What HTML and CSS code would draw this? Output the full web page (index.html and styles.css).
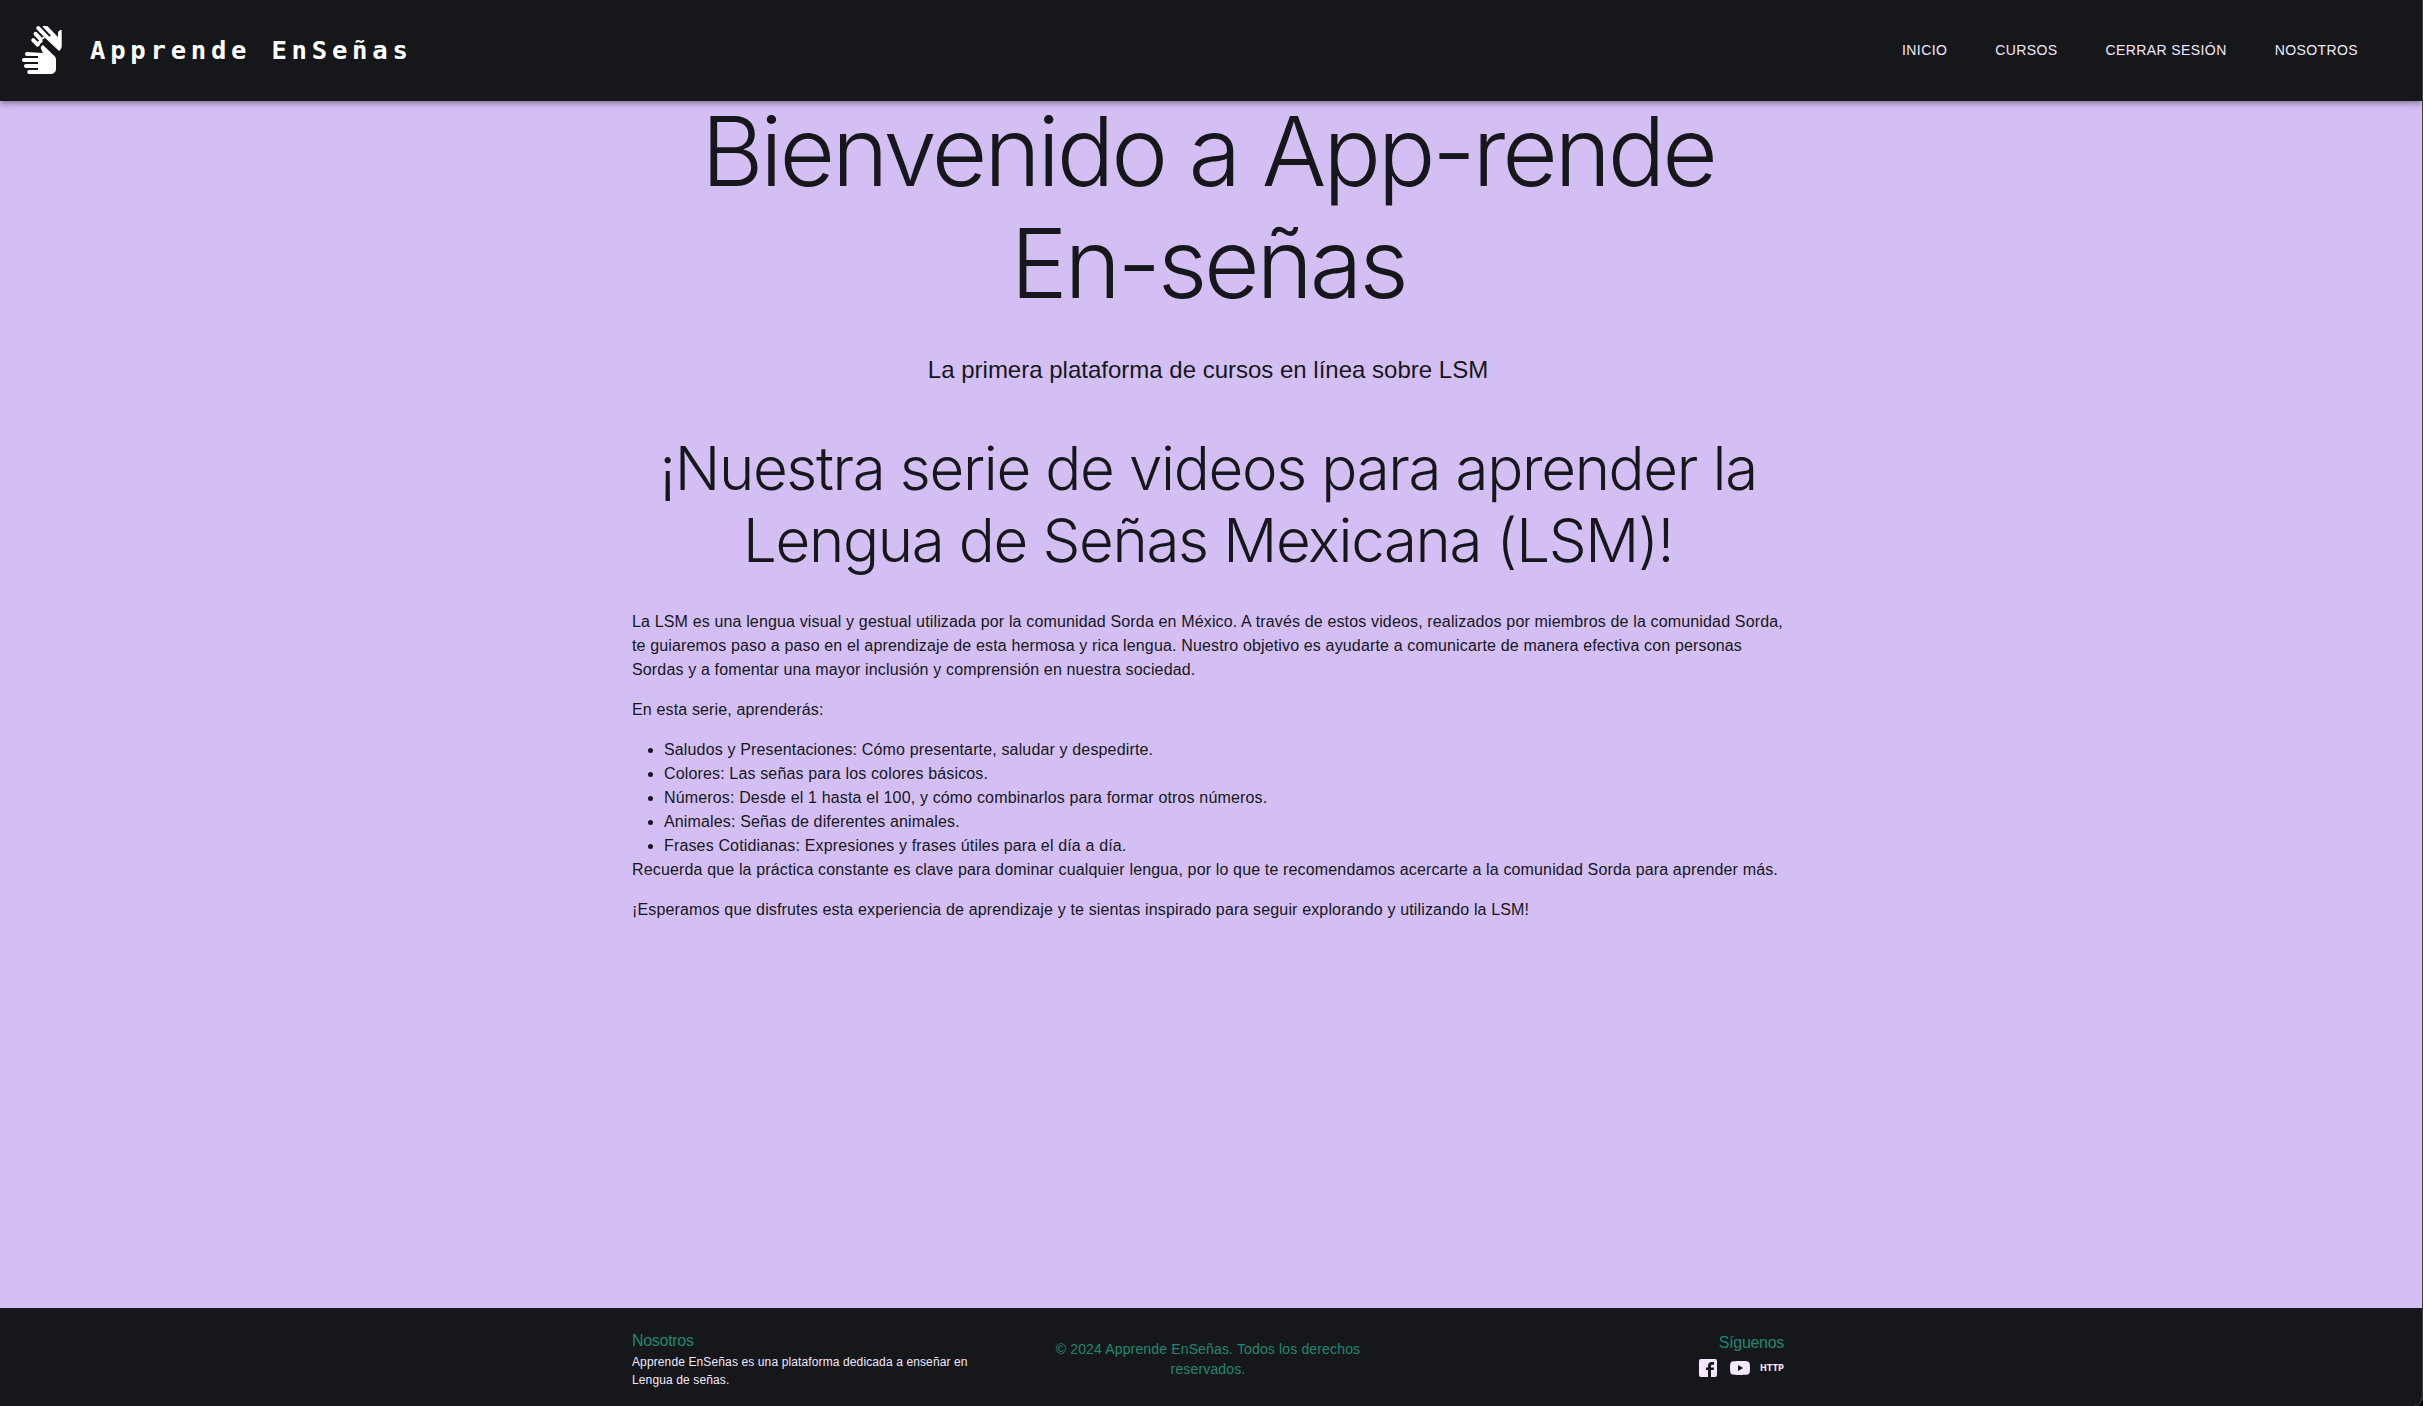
FILE: index.html
```html
<!DOCTYPE html>
<html lang="es">
<head>
<meta charset="utf-8">
<title>Apprende EnSeñas</title>
<link rel="stylesheet" href="styles.css">
</head>
<body>
<div class="page">
  <header class="topbar">
    <div class="brand">
      <svg class="brand-icon" viewBox="0 0 24 24" aria-hidden="true"><path d="M12.490 13.500l-.93-1.860c-.37-.74-.07-1.640.67-2.010l.26-.13 5.730 5.460c.5.470.78 1.130.78 1.810v4.730c0 1.380-1.120 2.500-2.500 2.500H5.600c-.55 0-1-.45-1-1s.45-1 1-1H10v-1H4c-.55 0-1-.45-1-1s.45-1 1-1h6v-1H3c-.55 0-1-.45-1-1s.45-1 1-1h7v-1H4.500c-.55 0-1-.45-1-1s.45-1 1-1z"/><path transform="translate(.6 0)" d="M11.700 8.030c-.8.380-1.350 1.080-1.560 1.880l-1.200.600-2.650-2.770c-.38-.4-.36-1.030.04-1.410.4-.38 1.030-.36 1.410.04l1.500 1.560.72-.69-2.500-2.650c-.38-.4-.36-1.030.04-1.410.4-.38 1.030-.36 1.410.04l3.200 3.350.72-.690-4-4.170c-.38-.4-.36-1.030.04-1.410.4-.38 1.030-.36 1.410.04l4.840 5.070.72-.69-3.800-3.980c-.38-.4-.36-1.030.04-1.410.4-.38 1.030-.36 1.410.04l5.840 6.100.1-2.080c.04-.83.74-1.460 1.560-1.420l.26.010v8.200c0 .680-.28 1.330-.78 1.800l-.56.530-7.300-6.900c-.26-.25-.6-.39-.95-.39z"/></svg>
      <span class="brand-name">Apprende EnSeñas</span>
    </div>
    <nav class="menu">
      <a>INICIO</a><a>CURSOS</a><a>CERRAR SESIÓN</a><a>NOSOTROS</a>
    </nav>
  </header>

  <main class="content">
    <h1 class="title">Bienvenido a App-rende<br>En-señas</h1>
    <p class="subtitle">La primera plataforma de cursos en línea sobre LSM</p>
    <h2 class="heading">¡Nuestra serie de videos para aprender la<br>Lengua de Señas Mexicana (LSM)!</h2>
    <div class="copy">
      <p>La LSM es una lengua visual y gestual utilizada por la comunidad Sorda en México. A través de estos videos, realizados por miembros de la comunidad Sorda,<br>te guiaremos paso a paso en el aprendizaje de esta hermosa y rica lengua. Nuestro objetivo es ayudarte a comunicarte de manera efectiva con personas<br>Sordas y a fomentar una mayor inclusión y comprensión en nuestra sociedad.</p>
      <p>En esta serie, aprenderás:</p>
      <ul>
        <li>Saludos y Presentaciones: Cómo presentarte, saludar y despedirte.</li>
        <li>Colores: Las señas para los colores básicos.</li>
        <li>Números: Desde el 1 hasta el 100, y cómo combinarlos para formar otros números.</li>
        <li>Animales: Señas de diferentes animales.</li>
        <li>Frases Cotidianas: Expresiones y frases útiles para el día a día.</li>
      </ul>
      <p>Recuerda que la práctica constante es clave para dominar cualquier lengua, por lo que te recomendamos acercarte a la comunidad Sorda para aprender más.</p>
      <p>¡Esperamos que disfrutes esta experiencia de aprendizaje y te sientas inspirado para seguir explorando y utilizando la LSM!</p>
    </div>
  </main>

  <footer class="footer">
    <div class="footer-inner">
      <section class="about">
        <h3>Nosotros</h3>
        <p>Apprende EnSeñas es una plataforma dedicada a enseñar en<br>Lengua de señas.</p>
      </section>
      <p class="rights">© 2024 Apprende EnSeñas. Todos los derechos<br>reservados.</p>
      <section class="follow">
        <h3>Síguenos</h3>
        <div class="links">
          <svg viewBox="0 0 24 24" aria-hidden="true"><path d="M19 3H5a2 2 0 0 0-2 2v14a2 2 0 0 0 2 2h7v-7h-2v-2.500h2v-2C12 7.500 13.500 6 15.600 6H18v2.700h-1.500c-1 0-1.500.5-1.500 1.300v1.500h3L17.700 14H15v7h4a2 2 0 0 0 2-2V5a2 2 0 0 0-2-2z"/></svg>
          <svg viewBox="0 0 24 24" aria-hidden="true"><path d="M10 15l5.190-3L10 9v6m11.560-7.830c.13.470.22 1.100.28 1.900.07.800.1 1.490.1 2.090L22 12c0 2.190-.16 3.800-.44 4.830-.25.900-.83 1.480-1.730 1.730-.470.130-1.330.220-2.650.280-1.300.070-2.490.100-3.590.100L12 19c-4.190 0-6.800-.16-7.830-.44-.9-.25-1.480-.83-1.730-1.730-.13-.470-.22-1.100-.28-1.900-.07-.800-.1-1.490-.1-2.090L2 12c0-2.190.16-3.800.44-4.830.25-.900.83-1.480 1.730-1.730.470-.130 1.330-.220 2.650-.280 1.300-.070 2.490-.100 3.590-.100L12 5c4.190 0 6.800.16 7.830.44.900.25 1.480.83 1.730 1.730z"/></svg>
          <span class="http">HTTP</span>
        </div>
      </section>
    </div>
  </footer>
</div>
</body>
</html>
```
FILE: styles.css
```css
* { box-sizing: border-box; }

html { background: #000; }

body {
  margin: 0;
  color: #15171a;
  font-family: "Liberation Sans", Arial, sans-serif;
  font-size: 16px;
}

h1, h2, h3, p, ul { margin: 0; font-weight: 400; }

.page {
  height: 1406px;
  display: flex;
  flex-direction: column;
  overflow: hidden;
  background: #d4bff4;
  border-right: 1px solid #3c3d3f;
  border-bottom-right-radius: 9px;
}

.topbar {
  flex: none;
  height: 101px;
  padding: 0 56px 0 18px;
  display: flex;
  align-items: center;
  justify-content: space-between;
  background: #15171a;
  z-index: 1;
  box-shadow: 0 2px 4px -1px rgba(0,0,0,.2), 0 4px 5px 0 rgba(0,0,0,.14), 0 1px 10px 0 rgba(0,0,0,.12);
}

.brand { display: flex; align-items: center; gap: 24px; padding-bottom: 1px; }
.brand-icon { width: 48px; height: 48px; fill: #fff; }
.brand-name {
  font: 700 25.6px/1.5 "DejaVu Sans Mono", monospace;
  letter-spacing: 4.75px;
  color: #fff;
}

.menu { display: flex; gap: 32px; padding-bottom: 2px; }
.menu a {
  padding: 6px 8px;
  font-size: 14px;
  line-height: 24px;
  letter-spacing: .4px;
  color: #f3e8ff;
}

.content {
  flex: 1;
  width: 1152px;
  margin-left: 632px;
  white-space: nowrap;
}

.title, .heading {
  font-family: Inter, "Liberation Sans", sans-serif;
  font-weight: 300;
  text-align: center;
}
.title {
  margin-top: -6px;
  font-size: 96px;
  line-height: 112px;
  letter-spacing: -3.25px;
}
.subtitle {
  margin-top: 35px;
  font-size: 24px;
  line-height: 32px;
  text-align: center;
}
.heading {
  margin-top: 46px;
  font-size: 60px;
  line-height: 72px;
  letter-spacing: -1.35px;
}

.copy { margin-top: 34px; line-height: 24px; letter-spacing: .15px; }
.copy p + p, .copy ul { margin-top: 16px; }
.copy ul { padding-left: 32px; }

.footer { flex: none; height: 98px; background: #15171a; }
.footer-inner {
  width: 1152px;
  height: 98px;
  margin-left: 632px;
  display: grid;
  grid-template-columns: 1fr 1fr 1fr;
  align-items: center;
  column-gap: 32px;
  white-space: nowrap;
}
.footer h3 { font-size: 16px; line-height: 24px; letter-spacing: -.3px; color: #228770; }
.about { padding-top: 3px; }
.about p { font-size: 12px; line-height: 18px; letter-spacing: .12px; color: #f3e8ff; }
.rights { padding-top: 3px; font-size: 14px; line-height: 20px; letter-spacing: .15px; text-align: center; color: #228770; }
.follow { text-align: right; padding-bottom: 4px; }
.links { display: flex; justify-content: flex-end; gap: 8px; margin-top: 1px; }
.links svg { width: 24px; height: 24px; fill: #f3e8ff; }
.http {
  width: 24px;
  font: 800 8.5px/24px Inter, "Liberation Sans", sans-serif;
  letter-spacing: 0;
  color: #f3e8ff;
  text-align: center;
}
```
